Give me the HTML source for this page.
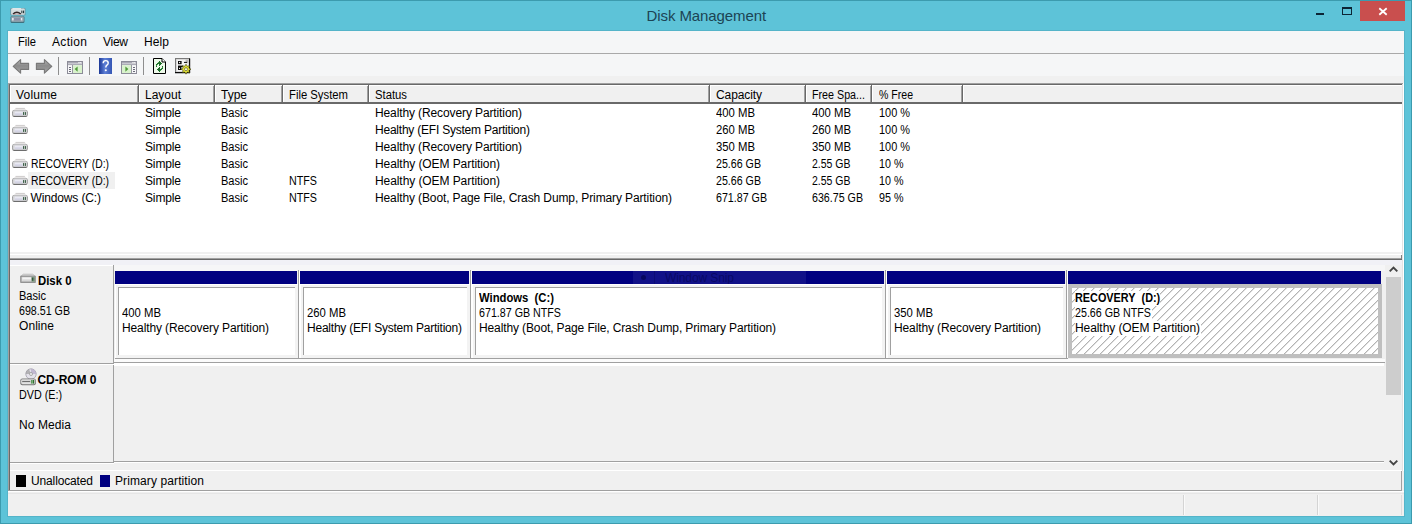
<!DOCTYPE html>
<html>
<head>
<meta charset="utf-8">
<title>Disk Management</title>
<style>
*{box-sizing:border-box;margin:0;padding:0}
html,body{width:1412px;height:524px;overflow:hidden;background:#5dc3d8;}
body{font-family:"Liberation Sans",sans-serif;font-size:12px;color:#000;position:relative;}
.abs{position:absolute}
.t{position:absolute;white-space:pre;font-size:12px;line-height:14px;color:#000;}
.b{font-weight:bold}
svg{position:absolute;overflow:visible}
</style>
</head>
<body>
<div class="abs" style="left:0px;top:0px;width:1412px;height:524px;background:#5dc3d8;border:1px solid #3c9bae;"></div>
<div class="abs" style="left:7px;top:30px;width:1398px;height:487px;background:transparent;border:1px solid #54b4c9;"></div>
<div class="t" style="left:646.6px;top:6.9px;letter-spacing:-0.099px;font-size:15px;line-height:17px;color:#1c4454;">Disk Management</div>
<div class="abs" style="left:1360px;top:1px;width:45px;height:20px;background:#c94f4e;"></div>
<svg style="left:1378px;top:7px" width="10" height="9" viewBox="0 0 10 9"><path d="M1.3 1.3 L8.7 7.7 M8.7 1.3 L1.3 7.7" stroke="#fff" stroke-width="1.8" fill="none"/></svg>
<div class="abs" style="left:1342px;top:7px;width:10px;height:8px;background:transparent;border:1px solid #0c2535;border-top-width:2px;"></div>
<div class="abs" style="left:1316px;top:13px;width:8px;height:2px;background:#0c2535;"></div>
<div class="abs" style="left:8px;top:31px;width:1396px;height:485px;background:#f0f0f0;"></div>
<div class="abs" style="left:8px;top:31px;width:1396px;height:22px;background:#f5f6f7;"></div>
<div class="t" style="left:18px;top:35px;transform:scaleX(0.9305);transform-origin:0 0;">File</div>
<div class="t" style="left:52px;top:35px;letter-spacing:0.328px;">Action</div>
<div class="t" style="left:103px;top:35px;letter-spacing:-0.266px;">View</div>
<div class="t" style="left:144px;top:35px;letter-spacing:0.104px;">Help</div>
<div class="abs" style="left:8px;top:53px;width:1396px;height:1px;background:#a9a9a9;"></div>
<div class="abs" style="left:8px;top:54px;width:1396px;height:22px;background:#f5f6f7;"></div>
<div class="abs" style="left:8px;top:76px;width:1396px;height:8px;background:#f0f0f0;"></div>
<svg style="left:12px;top:58px" width="18" height="17" viewBox="0 0 18 17"><defs><linearGradient id="ga" x1="0" y1="0" x2="0" y2="1"><stop offset="0" stop-color="#b4b4b4"/><stop offset="0.45" stop-color="#8c8c8c"/><stop offset="1" stop-color="#a6a6a6"/></linearGradient></defs><path d="M1.2 8.4 L8.6 1.6 V5.4 H16.6 V11.4 H8.6 V15.2 Z" fill="url(#ga)" stroke="#787878" stroke-width="1.1" stroke-linejoin="round"/></svg>
<svg style="left:35px;top:58px" width="18" height="17" viewBox="0 0 18 17"><path d="M16.8 8.4 L9.4 1.6 V5.4 H1.4 V11.4 H9.4 V15.2 Z" fill="url(#ga)" stroke="#787878" stroke-width="1.1" stroke-linejoin="round"/></svg>
<div class="abs" style="left:58px;top:57px;width:1px;height:18px;background:#8e8e8e"></div>
<div class="abs" style="left:89px;top:57px;width:1px;height:18px;background:#8e8e8e"></div>
<div class="abs" style="left:143px;top:57px;width:1px;height:18px;background:#8e8e8e"></div>
<svg style="left:67px;top:61px" width="16" height="13" viewBox="0 0 16 13"><rect x="0.5" y="0.5" width="15" height="12" fill="#f7f7f9" stroke="#8c8c98" stroke-width="1"/><rect x="1" y="1" width="14" height="1.6" fill="#a9a9b4"/><rect x="11.4" y="1" width="1.2" height="1.2" fill="#fff"/><rect x="13.2" y="1" width="1.2" height="1.2" fill="#fff"/><path d="M1 3.6 H15" stroke="#9a9aa6" stroke-width="0.9"/><path d="M5.6 4 V12" stroke="#8c8c98" stroke-width="1"/><rect x="6.1" y="4.2" width="8.9" height="7.8" fill="#d9f2cc"/><rect x="2" y="6" width="2" height="1" fill="#6a6a78"/><rect x="2" y="8" width="2" height="1" fill="#6a6a78"/><rect x="2" y="10" width="2" height="1" fill="#6a6a78"/><path d="M10.6 5.4 L7.6 8.1 L10.6 10.8 Z" fill="#4f9a3a"/></svg>
<svg style="left:99px;top:58px" width="13" height="16" viewBox="0 0 13 16"><defs><linearGradient id="gh" x1="0" y1="0" x2="1" y2="0"><stop offset="0" stop-color="#1b3796"/><stop offset="0.45" stop-color="#5d7fd6"/><stop offset="1" stop-color="#3556b4"/></linearGradient></defs><rect x="0" y="0" width="13" height="16" fill="url(#gh)"/><path d="M4.2 5.2 Q4.2 2.6 6.7 2.6 Q9.2 2.6 9.2 4.9 Q9.2 6.3 7.9 7.2 Q6.8 8 6.8 9.6" stroke="#fff" stroke-width="1.45" fill="none"/><circle cx="6.8" cy="12.3" r="1.05" fill="#fff"/></svg>
<svg style="left:121px;top:61px" width="16" height="13" viewBox="0 0 16 13"><rect x="0.5" y="0.5" width="15" height="12" fill="#f7f7f9" stroke="#8c8c98" stroke-width="1"/><rect x="1" y="1" width="14" height="1.6" fill="#a9a9b4"/><rect x="11.4" y="1" width="1.2" height="1.2" fill="#fff"/><rect x="13.2" y="1" width="1.2" height="1.2" fill="#fff"/><path d="M1 3.6 H15" stroke="#9a9aa6" stroke-width="0.9"/><path d="M10.4 4 V12" stroke="#8c8c98" stroke-width="1"/><rect x="1" y="4.2" width="8.9" height="7.8" fill="#d9f2cc"/><rect x="12" y="6" width="2" height="1" fill="#6a6a78"/><rect x="12" y="8" width="2" height="1" fill="#6a6a78"/><rect x="12" y="10" width="2" height="1" fill="#6a6a78"/><path d="M4.4 5.4 L7.4 8.1 L4.4 10.8 Z" fill="#4f9a3a"/></svg>
<svg style="left:153px;top:58px" width="13" height="16" viewBox="0 0 13 16"><path d="M0.5 0.5 H9 L12.5 4 V15.5 H0.5 Z" fill="#eefaea" stroke="#000" stroke-width="1" stroke-linejoin="miter"/><path d="M9 0.5 V4 H12.5" fill="#fff" stroke="#000" stroke-width="1"/><rect x="4" y="5" width="4" height="1" fill="#1f6e2b"/><rect x="6" y="3" width="1" height="5" fill="#1f6e2b"/><rect x="7" y="4" width="1" height="3" fill="#1f6e2b"/><rect x="8" y="5" width="1" height="1" fill="#1f6e2b"/><rect x="3" y="6" width="1" height="1" fill="#1f6e2b"/><rect x="3" y="8" width="1" height="1" fill="#1f6e2b"/><rect x="4" y="6" width="1" height="1" fill="#3c9a45"/><rect x="3" y="7" width="1" height="1" fill="#3c9a45"/><rect x="5" y="4" width="1" height="1" fill="#3c9a45"/><rect x="5" y="11" width="4" height="1" fill="#1f6e2b"/><rect x="6" y="9" width="1" height="5" fill="#1f6e2b"/><rect x="5" y="10" width="1" height="3" fill="#1f6e2b"/><rect x="4" y="11" width="1" height="1" fill="#1f6e2b"/><rect x="9" y="10" width="1" height="1" fill="#1f6e2b"/><rect x="9" y="8" width="1" height="1" fill="#1f6e2b"/><rect x="8" y="10" width="1" height="1" fill="#3c9a45"/><rect x="9" y="9" width="1" height="1" fill="#3c9a45"/><rect x="7" y="12" width="1" height="1" fill="#3c9a45"/></svg>
<svg style="left:175px;top:58px" width="17" height="17" viewBox="0 0 17 17"><rect x="0.5" y="0.5" width="14" height="14" fill="#c9c9c9" stroke="#7a7a7a" stroke-width="1"/><rect x="1.6" y="1.6" width="11.8" height="11.8" fill="#f4f4f4"/><rect x="10.6" y="1.6" width="2.8" height="3.6" fill="#b9b9b9"/><path d="M0 14.6 H15 M14.6 0.4 V15" stroke="#0a0a0a" stroke-width="1.2"/><rect x="3" y="3" width="3.6" height="3.2" fill="#0a0a0a"/><rect x="4" y="3.9" width="1.2" height="1.2" fill="#f0f0f0"/><rect x="9" y="3.9" width="3" height="1" fill="#0a0a0a"/><rect x="3" y="7.6" width="5" height="1.4" fill="#0a0a0a"/><rect x="3" y="9" width="3.4" height="3" fill="#0a0a0a"/><rect x="4" y="9.8" width="1" height="1.2" fill="#f0f0f0"/><g transform="translate(11,11.2)"><path d="M0.00 -5.00 L1.19 -2.86 L3.54 -3.54 L2.86 -1.19 L5.00 0.00 L2.86 1.19 L3.54 3.54 L1.19 2.86 L0.00 5.00 L-1.19 2.86 L-3.54 3.54 L-2.86 1.19 L-5.00 0.00 L-2.86 -1.19 L-3.54 -3.54 L-1.19 -2.86 Z" fill="#e4e43a" stroke="#2c2c00" stroke-width="0.55" stroke-linejoin="miter"/><circle cx="0" cy="0" r="1.5" fill="#f6f6e0" stroke="#2c2c00" stroke-width="0.5"/></g></svg>
<svg style="left:10px;top:8px" width="16" height="16" viewBox="0 0 16 16"><rect x="0.2" y="0" width="15.4" height="7.4" rx="1.2" fill="#6f9aa6"/><rect x="1.1" y="0.5" width="13.6" height="6.2" rx="0.8" fill="#d5dddf"/><rect x="2.4" y="0.2" width="8.6" height="1.2" fill="#eef2f3"/><path d="M3 6 Q6.8 2.4 10.8 6" stroke="#33282a" stroke-width="1.4" fill="none"/><path d="M3.4 6.8 Q6.8 4.8 10.4 6.8" stroke="#c3a0a0" stroke-width="0.9" fill="none"/><rect x="11.3" y="2.6" width="1.1" height="2.6" fill="#26393b"/><rect x="13" y="2.6" width="1.1" height="2.6" fill="#26393b"/><rect x="0.4" y="7.9" width="14.2" height="7.1" rx="1.6" fill="#56828f"/><rect x="1.3" y="8.6" width="12.4" height="5.2" rx="1.2" fill="#97a9b2"/><rect x="3" y="9.8" width="8.6" height="2.8" fill="#8a90a6"/><rect x="2.2" y="10" width="1.4" height="2.4" fill="#f2f6f8"/><rect x="10.8" y="10" width="1.4" height="2.4" fill="#e6ecf0"/><path d="M1.2 14.5 H13.8" stroke="#3a6f7d" stroke-width="0.9"/></svg>
<div class="abs" style="left:8px;top:83px;width:1396px;height:1px;background:#a0a0a0;"></div>
<div class="abs" style="left:8px;top:83px;width:1px;height:408px;background:#a0a0a0;"></div>
<div class="abs" style="left:9px;top:84px;width:1394px;height:1px;background:#696969;"></div>
<div class="abs" style="left:9px;top:84px;width:1px;height:407px;background:#696969;"></div>
<div class="abs" style="left:1403px;top:83px;width:1px;height:388px;background:#ffffff;"></div>
<div class="abs" style="left:1402px;top:84px;width:1px;height:387px;background:#e3e3e3;"></div>
<div class="abs" style="left:10px;top:85px;width:1392px;height:17px;background:#f0f0f0;"></div>
<div class="abs" style="left:10px;top:85px;width:1392px;height:1px;background:#ffffff;"></div>
<div class="abs" style="left:10px;top:102px;width:1392px;height:2px;background:#696969;"></div>
<div class="abs" style="left:10px;top:104px;width:1392px;height:148px;background:#ffffff;"></div>
<div class="abs" style="left:138px;top:85px;width:1px;height:18px;background:#696969;"></div>
<div class="abs" style="left:137px;top:86px;width:1px;height:16px;background:#a0a0a0;"></div>
<div class="abs" style="left:139px;top:86px;width:1px;height:16px;background:#ffffff;"></div>
<div class="abs" style="left:214px;top:85px;width:1px;height:18px;background:#696969;"></div>
<div class="abs" style="left:213px;top:86px;width:1px;height:16px;background:#a0a0a0;"></div>
<div class="abs" style="left:215px;top:86px;width:1px;height:16px;background:#ffffff;"></div>
<div class="abs" style="left:282px;top:85px;width:1px;height:18px;background:#696969;"></div>
<div class="abs" style="left:281px;top:86px;width:1px;height:16px;background:#a0a0a0;"></div>
<div class="abs" style="left:283px;top:86px;width:1px;height:16px;background:#ffffff;"></div>
<div class="abs" style="left:368px;top:85px;width:1px;height:18px;background:#696969;"></div>
<div class="abs" style="left:367px;top:86px;width:1px;height:16px;background:#a0a0a0;"></div>
<div class="abs" style="left:369px;top:86px;width:1px;height:16px;background:#ffffff;"></div>
<div class="abs" style="left:709px;top:85px;width:1px;height:18px;background:#696969;"></div>
<div class="abs" style="left:708px;top:86px;width:1px;height:16px;background:#a0a0a0;"></div>
<div class="abs" style="left:710px;top:86px;width:1px;height:16px;background:#ffffff;"></div>
<div class="abs" style="left:805px;top:85px;width:1px;height:18px;background:#696969;"></div>
<div class="abs" style="left:804px;top:86px;width:1px;height:16px;background:#a0a0a0;"></div>
<div class="abs" style="left:806px;top:86px;width:1px;height:16px;background:#ffffff;"></div>
<div class="abs" style="left:871px;top:85px;width:1px;height:18px;background:#696969;"></div>
<div class="abs" style="left:870px;top:86px;width:1px;height:16px;background:#a0a0a0;"></div>
<div class="abs" style="left:872px;top:86px;width:1px;height:16px;background:#ffffff;"></div>
<div class="abs" style="left:962px;top:85px;width:1px;height:18px;background:#696969;"></div>
<div class="abs" style="left:961px;top:86px;width:1px;height:16px;background:#a0a0a0;"></div>
<div class="abs" style="left:963px;top:86px;width:1px;height:16px;background:#ffffff;"></div>
<div class="abs" style="left:10px;top:86px;width:1px;height:16px;background:#ffffff;"></div>
<div class="t" style="left:16px;top:88px;letter-spacing:0.194px;">Volume</div>
<div class="t" style="left:145px;top:88px;letter-spacing:-0.006px;">Layout</div>
<div class="t" style="left:221px;top:88px;letter-spacing:-0.005px;">Type</div>
<div class="t" style="left:289px;top:88px;transform:scaleX(0.9412);transform-origin:0 0;">File System</div>
<div class="t" style="left:375px;top:88px;transform:scaleX(0.9403);transform-origin:0 0;">Status</div>
<div class="t" style="left:716px;top:88px;letter-spacing:-0.098px;">Capacity</div>
<div class="t" style="left:812px;top:88px;transform:scaleX(0.8926);transform-origin:0 0;">Free Spa...</div>
<div class="t" style="left:879px;top:88px;transform:scaleX(0.8788);transform-origin:0 0;">% Free</div>
<div class="abs" style="left:28px;top:172px;width:87px;height:17px;background:#f0f0f0;"></div>
<svg style="left:12px;top:108px" width="16" height="9" viewBox="0 0 16 9"><path d="M4 0 H12.5 L14.5 2.2 H1.5 Z" fill="#e6e4e4"/><path d="M3.6 0.4 H12.8" stroke="#c9c6c6" stroke-width="0.8"/><rect x="0.2" y="2" width="15.6" height="7" rx="2.2" ry="2.2" fill="#8a8a8a"/><rect x="0.9" y="2.2" width="14.2" height="5.8" rx="1.6" ry="1.6" fill="#d4d4d6"/><rect x="2.6" y="3.6" width="8.2" height="3.6" fill="#e9e9f3"/><rect x="3" y="5.4" width="7.6" height="1.8" fill="#d3d3e3"/><rect x="11" y="4.1" width="1.1" height="2.8" fill="#3f634a"/><rect x="12.9" y="4.1" width="1.1" height="2.8" fill="#3f634a"/><path d="M1.6 8.4 H14.4" stroke="#6a6a6a" stroke-width="1"/></svg>
<div class="t" style="left:145px;top:106px;letter-spacing:-0.138px;">Simple</div>
<div class="t" style="left:221px;top:106px;transform:scaleX(0.9201);transform-origin:0 0;">Basic</div>
<div class="t" style="left:375px;top:106px;letter-spacing:-0.113px;">Healthy (Recovery Partition)</div>
<div class="t" style="left:716px;top:106px;transform:scaleX(0.9430);transform-origin:0 0;">400 MB</div>
<div class="t" style="left:812px;top:106px;transform:scaleX(0.9430);transform-origin:0 0;">400 MB</div>
<div class="t" style="left:878.5px;top:106px;transform:scaleX(0.9109);transform-origin:0 0;">100 %</div>
<svg style="left:12px;top:125px" width="16" height="9" viewBox="0 0 16 9"><path d="M4 0 H12.5 L14.5 2.2 H1.5 Z" fill="#e6e4e4"/><path d="M3.6 0.4 H12.8" stroke="#c9c6c6" stroke-width="0.8"/><rect x="0.2" y="2" width="15.6" height="7" rx="2.2" ry="2.2" fill="#8a8a8a"/><rect x="0.9" y="2.2" width="14.2" height="5.8" rx="1.6" ry="1.6" fill="#d4d4d6"/><rect x="2.6" y="3.6" width="8.2" height="3.6" fill="#e9e9f3"/><rect x="3" y="5.4" width="7.6" height="1.8" fill="#d3d3e3"/><rect x="11" y="4.1" width="1.1" height="2.8" fill="#3f634a"/><rect x="12.9" y="4.1" width="1.1" height="2.8" fill="#3f634a"/><path d="M1.6 8.4 H14.4" stroke="#6a6a6a" stroke-width="1"/></svg>
<div class="t" style="left:145px;top:123px;letter-spacing:-0.138px;">Simple</div>
<div class="t" style="left:221px;top:123px;transform:scaleX(0.9201);transform-origin:0 0;">Basic</div>
<div class="t" style="left:375px;top:123px;letter-spacing:-0.220px;">Healthy (EFI System Partition)</div>
<div class="t" style="left:716px;top:123px;transform:scaleX(0.9430);transform-origin:0 0;">260 MB</div>
<div class="t" style="left:812px;top:123px;transform:scaleX(0.9430);transform-origin:0 0;">260 MB</div>
<div class="t" style="left:878.5px;top:123px;transform:scaleX(0.9109);transform-origin:0 0;">100 %</div>
<svg style="left:12px;top:142px" width="16" height="9" viewBox="0 0 16 9"><path d="M4 0 H12.5 L14.5 2.2 H1.5 Z" fill="#e6e4e4"/><path d="M3.6 0.4 H12.8" stroke="#c9c6c6" stroke-width="0.8"/><rect x="0.2" y="2" width="15.6" height="7" rx="2.2" ry="2.2" fill="#8a8a8a"/><rect x="0.9" y="2.2" width="14.2" height="5.8" rx="1.6" ry="1.6" fill="#d4d4d6"/><rect x="2.6" y="3.6" width="8.2" height="3.6" fill="#e9e9f3"/><rect x="3" y="5.4" width="7.6" height="1.8" fill="#d3d3e3"/><rect x="11" y="4.1" width="1.1" height="2.8" fill="#3f634a"/><rect x="12.9" y="4.1" width="1.1" height="2.8" fill="#3f634a"/><path d="M1.6 8.4 H14.4" stroke="#6a6a6a" stroke-width="1"/></svg>
<div class="t" style="left:145px;top:140px;letter-spacing:-0.138px;">Simple</div>
<div class="t" style="left:221px;top:140px;transform:scaleX(0.9201);transform-origin:0 0;">Basic</div>
<div class="t" style="left:375px;top:140px;letter-spacing:-0.113px;">Healthy (Recovery Partition)</div>
<div class="t" style="left:716px;top:140px;transform:scaleX(0.9430);transform-origin:0 0;">350 MB</div>
<div class="t" style="left:812px;top:140px;transform:scaleX(0.9430);transform-origin:0 0;">350 MB</div>
<div class="t" style="left:878.5px;top:140px;transform:scaleX(0.9109);transform-origin:0 0;">100 %</div>
<svg style="left:12px;top:159px" width="16" height="9" viewBox="0 0 16 9"><path d="M4 0 H12.5 L14.5 2.2 H1.5 Z" fill="#e6e4e4"/><path d="M3.6 0.4 H12.8" stroke="#c9c6c6" stroke-width="0.8"/><rect x="0.2" y="2" width="15.6" height="7" rx="2.2" ry="2.2" fill="#8a8a8a"/><rect x="0.9" y="2.2" width="14.2" height="5.8" rx="1.6" ry="1.6" fill="#d4d4d6"/><rect x="2.6" y="3.6" width="8.2" height="3.6" fill="#e9e9f3"/><rect x="3" y="5.4" width="7.6" height="1.8" fill="#d3d3e3"/><rect x="11" y="4.1" width="1.1" height="2.8" fill="#3f634a"/><rect x="12.9" y="4.1" width="1.1" height="2.8" fill="#3f634a"/><path d="M1.6 8.4 H14.4" stroke="#6a6a6a" stroke-width="1"/></svg>
<div class="t" style="left:30.5px;top:157px;transform:scaleX(0.8643);transform-origin:0 0;">RECOVERY (D:)</div>
<div class="t" style="left:145px;top:157px;letter-spacing:-0.138px;">Simple</div>
<div class="t" style="left:221px;top:157px;transform:scaleX(0.9201);transform-origin:0 0;">Basic</div>
<div class="t" style="left:375px;top:157px;letter-spacing:-0.077px;">Healthy (OEM Partition)</div>
<div class="t" style="left:716px;top:157px;transform:scaleX(0.8875);transform-origin:0 0;">25.66 GB</div>
<div class="t" style="left:812px;top:157px;transform:scaleX(0.8744);transform-origin:0 0;">2.55 GB</div>
<div class="t" style="left:878.5px;top:157px;transform:scaleX(0.8955);transform-origin:0 0;">10 %</div>
<svg style="left:12px;top:176px" width="16" height="9" viewBox="0 0 16 9"><path d="M4 0 H12.5 L14.5 2.2 H1.5 Z" fill="#e6e4e4"/><path d="M3.6 0.4 H12.8" stroke="#c9c6c6" stroke-width="0.8"/><rect x="0.2" y="2" width="15.6" height="7" rx="2.2" ry="2.2" fill="#8a8a8a"/><rect x="0.9" y="2.2" width="14.2" height="5.8" rx="1.6" ry="1.6" fill="#d4d4d6"/><rect x="2.6" y="3.6" width="8.2" height="3.6" fill="#e9e9f3"/><rect x="3" y="5.4" width="7.6" height="1.8" fill="#d3d3e3"/><rect x="11" y="4.1" width="1.1" height="2.8" fill="#3f634a"/><rect x="12.9" y="4.1" width="1.1" height="2.8" fill="#3f634a"/><path d="M1.6 8.4 H14.4" stroke="#6a6a6a" stroke-width="1"/></svg>
<div class="t" style="left:30.5px;top:174px;transform:scaleX(0.8643);transform-origin:0 0;">RECOVERY (D:)</div>
<div class="t" style="left:145px;top:174px;letter-spacing:-0.138px;">Simple</div>
<div class="t" style="left:221px;top:174px;transform:scaleX(0.9201);transform-origin:0 0;">Basic</div>
<div class="t" style="left:289px;top:174px;transform:scaleX(0.8933);transform-origin:0 0;">NTFS</div>
<div class="t" style="left:375px;top:174px;letter-spacing:-0.077px;">Healthy (OEM Partition)</div>
<div class="t" style="left:716px;top:174px;transform:scaleX(0.8875);transform-origin:0 0;">25.66 GB</div>
<div class="t" style="left:812px;top:174px;transform:scaleX(0.8744);transform-origin:0 0;">2.55 GB</div>
<div class="t" style="left:878.5px;top:174px;transform:scaleX(0.8955);transform-origin:0 0;">10 %</div>
<svg style="left:12px;top:193px" width="16" height="9" viewBox="0 0 16 9"><path d="M4 0 H12.5 L14.5 2.2 H1.5 Z" fill="#e6e4e4"/><path d="M3.6 0.4 H12.8" stroke="#c9c6c6" stroke-width="0.8"/><rect x="0.2" y="2" width="15.6" height="7" rx="2.2" ry="2.2" fill="#8a8a8a"/><rect x="0.9" y="2.2" width="14.2" height="5.8" rx="1.6" ry="1.6" fill="#d4d4d6"/><rect x="2.6" y="3.6" width="8.2" height="3.6" fill="#e9e9f3"/><rect x="3" y="5.4" width="7.6" height="1.8" fill="#d3d3e3"/><rect x="11" y="4.1" width="1.1" height="2.8" fill="#3f634a"/><rect x="12.9" y="4.1" width="1.1" height="2.8" fill="#3f634a"/><path d="M1.6 8.4 H14.4" stroke="#6a6a6a" stroke-width="1"/></svg>
<div class="t" style="left:30.5px;top:191px;letter-spacing:-0.138px;">Windows (C:)</div>
<div class="t" style="left:145px;top:191px;letter-spacing:-0.138px;">Simple</div>
<div class="t" style="left:221px;top:191px;transform:scaleX(0.9201);transform-origin:0 0;">Basic</div>
<div class="t" style="left:289px;top:191px;transform:scaleX(0.8933);transform-origin:0 0;">NTFS</div>
<div class="t" style="left:375px;top:191px;letter-spacing:-0.117px;">Healthy (Boot, Page File, Crash Dump, Primary Partition)</div>
<div class="t" style="left:716px;top:191px;transform:scaleX(0.8889);transform-origin:0 0;">671.87 GB</div>
<div class="t" style="left:812px;top:191px;transform:scaleX(0.8889);transform-origin:0 0;">636.75 GB</div>
<div class="t" style="left:878.5px;top:191px;transform:scaleX(0.8955);transform-origin:0 0;">95 %</div>
<div class="abs" style="left:10px;top:252px;width:1392px;height:7px;background:#f0f0f0;"></div>
<div class="abs" style="left:10px;top:254px;width:1392px;height:1px;background:#ffffff;"></div>
<div class="abs" style="left:10px;top:258px;width:1392px;height:1px;background:#a0a0a0;"></div>
<div class="abs" style="left:10px;top:259px;width:1392px;height:1px;background:#696969;"></div>
<div class="abs" style="left:1401px;top:255px;width:1px;height:4px;background:#808080;"></div>
<div class="abs" style="left:10px;top:260px;width:1392px;height:5px;background:#f1f1f6;"></div>
<div class="abs" style="left:10px;top:265px;width:1392px;height:205px;background:#f0f0f0;"></div>
<div class="abs" style="left:114px;top:265px;width:1271px;height:6px;background:#f6f6f7;"></div>
<div class="abs" style="left:113px;top:265px;width:1px;height:98px;background:#a0a0a0;"></div>
<div class="abs" style="left:113px;top:365px;width:1px;height:98px;background:#a0a0a0;"></div>
<div class="abs" style="left:10px;top:265px;width:103px;height:1px;background:#ffffff;"></div>
<div class="abs" style="left:10px;top:363px;width:104px;height:1px;background:#a0a0a0;"></div>
<div class="abs" style="left:10px;top:364px;width:104px;height:1px;background:#ffffff;"></div>
<div class="abs" style="left:114px;top:359px;width:1271px;height:3px;background:#fbfbfb;"></div>
<div class="abs" style="left:114px;top:362px;width:1271px;height:1px;background:#a0a0a0;"></div>
<div class="abs" style="left:114px;top:363px;width:1270px;height:3px;background:#ffffff;"></div>
<div class="abs" style="left:10px;top:462px;width:104px;height:1px;background:#a0a0a0;"></div>
<div class="abs" style="left:114px;top:461px;width:1270px;height:1px;background:#a0a0a0;"></div>
<div class="abs" style="left:114px;top:462px;width:1270px;height:1px;background:#ffffff;"></div>
<div class="abs" style="left:10px;top:463px;width:104px;height:1px;background:#ffffff;"></div>
<svg style="left:20px;top:274px" width="16" height="9" viewBox="0 0 16 9"><path d="M3.2 0.2 H12.8 L14.8 2 H1.2 Z" fill="#dcdcdc" stroke="#a8a8a8" stroke-width="0.6"/><rect x="0.3" y="1.8" width="15.4" height="7" fill="#7d7d7d"/><rect x="1.3" y="2.6" width="13.4" height="5.2" fill="#c9c9c9"/><rect x="2.2" y="3.4" width="8.8" height="3.6" fill="#f3f3f3"/><rect x="2.2" y="5.4" width="8.8" height="1.6" fill="#d6d6d6"/><rect x="11.5" y="2.6" width="3.4" height="5.4" fill="#8fa38f"/><rect x="11.9" y="3.6" width="1.2" height="3.2" fill="#2f5a3c"/><rect x="13.3" y="3.6" width="1.0" height="3.2" fill="#55775a"/></svg>
<div class="t b" style="left:37.5px;top:273.5px;transform:scaleX(0.9474);transform-origin:0 0;">Disk 0</div>
<div class="t" style="left:19px;top:289px;transform:scaleX(0.9201);transform-origin:0 0;">Basic</div>
<div class="t" style="left:19px;top:304px;transform:scaleX(0.8889);transform-origin:0 0;">698.51 GB</div>
<div class="t" style="left:19px;top:319px;letter-spacing:0.062px;">Online</div>
<svg style="left:20px;top:367.5px" width="17" height="18" viewBox="0 0 17 18"><circle cx="11" cy="6" r="5.2" fill="#e4e2ea" stroke="#a9a7b2" stroke-width="0.9"/><path d="M11 0.8 A5.2 5.2 0 0 1 16.2 6 L11 6 Z" fill="#b9aecb" opacity="0.8"/><path d="M5.8 6 A5.2 5.2 0 0 1 9 1.2 L11 6 Z" fill="#9c9c9c" opacity="0.7"/><circle cx="11" cy="6" r="1.5" fill="#f4f4f4" stroke="#909090" stroke-width="0.7"/><rect x="0.3" y="10.6" width="15.6" height="6.6" rx="2" ry="2" fill="#7a7a7a"/><rect x="1.1" y="11.2" width="14" height="5" rx="1.4" ry="1.4" fill="#d8d8d8"/><rect x="2.2" y="13" width="8" height="1.4" fill="#6e6e6e"/><rect x="2.2" y="14.4" width="8" height="1" fill="#f4f4f4"/><rect x="11.2" y="12" width="1.4" height="3.6" fill="#3f8f3f"/><rect x="13" y="12" width="1.2" height="3.6" fill="#2f6f2f"/></svg>
<div class="t b" style="left:37.5px;top:372.5px;letter-spacing:-0.049px;">CD-ROM 0</div>
<div class="t" style="left:19px;top:388px;transform:scaleX(0.8958);transform-origin:0 0;">DVD (E:)</div>
<div class="t" style="left:19px;top:418px;letter-spacing:0.092px;">No Media</div>
<div class="abs" style="left:115px;top:271px;width:182px;height:13px;background:#000080;"></div>
<div class="abs" style="left:115px;top:284px;width:183px;height:74px;background:#f3f3f3;"></div>
<div class="abs" style="left:115px;top:284px;width:183px;height:1px;background:#ffffff;"></div>
<div class="abs" style="left:115px;top:284px;width:1px;height:74px;background:#ffffff;"></div>
<div class="abs" style="left:115px;top:358px;width:185px;height:1px;background:#a0a0a0;"></div>
<div class="abs" style="left:298px;top:270px;width:1px;height:89px;background:#a0a0a0;"></div>
<div class="abs" style="left:299px;top:271px;width:1px;height:87px;background:#ffffff;"></div>
<div class="abs" style="left:118px;top:287px;width:177px;height:68px;background:#ffffff;border-left:1px solid #a0a0a0;border-top:1px solid #a0a0a0;"></div>
<div class="t" style="left:122px;top:306px;transform:scaleX(0.9430);transform-origin:0 0;">400 MB</div>
<div class="t" style="left:122px;top:321px;letter-spacing:-0.113px;">Healthy (Recovery Partition)</div>
<div class="abs" style="left:300px;top:271px;width:169px;height:13px;background:#000080;"></div>
<div class="abs" style="left:300px;top:284px;width:170px;height:74px;background:#f3f3f3;"></div>
<div class="abs" style="left:300px;top:284px;width:170px;height:1px;background:#ffffff;"></div>
<div class="abs" style="left:300px;top:284px;width:1px;height:74px;background:#ffffff;"></div>
<div class="abs" style="left:300px;top:358px;width:172px;height:1px;background:#a0a0a0;"></div>
<div class="abs" style="left:470px;top:270px;width:1px;height:89px;background:#a0a0a0;"></div>
<div class="abs" style="left:471px;top:271px;width:1px;height:87px;background:#ffffff;"></div>
<div class="abs" style="left:303px;top:287px;width:164px;height:68px;background:#ffffff;border-left:1px solid #a0a0a0;border-top:1px solid #a0a0a0;"></div>
<div class="t" style="left:307px;top:306px;transform:scaleX(0.9430);transform-origin:0 0;">260 MB</div>
<div class="t" style="left:307px;top:321px;letter-spacing:-0.220px;">Healthy (EFI System Partition)</div>
<div class="abs" style="left:472px;top:271px;width:412px;height:13px;background:#000080;"></div>
<div class="abs" style="left:472px;top:284px;width:413px;height:74px;background:#f3f3f3;"></div>
<div class="abs" style="left:472px;top:284px;width:413px;height:1px;background:#ffffff;"></div>
<div class="abs" style="left:472px;top:284px;width:1px;height:74px;background:#ffffff;"></div>
<div class="abs" style="left:472px;top:358px;width:415px;height:1px;background:#a0a0a0;"></div>
<div class="abs" style="left:885px;top:270px;width:1px;height:89px;background:#a0a0a0;"></div>
<div class="abs" style="left:886px;top:271px;width:1px;height:87px;background:#ffffff;"></div>
<div class="abs" style="left:475px;top:287px;width:407px;height:68px;background:#ffffff;border-left:1px solid #a0a0a0;border-top:1px solid #a0a0a0;"></div>
<div class="t b" style="left:479px;top:291px;transform:scaleX(0.9390);transform-origin:0 0;">Windows&nbsp; (C:)</div>
<div class="t" style="left:479px;top:306px;transform:scaleX(0.8909);transform-origin:0 0;">671.87 GB NTFS</div>
<div class="t" style="left:479px;top:321px;letter-spacing:-0.117px;">Healthy (Boot, Page File, Crash Dump, Primary Partition)</div>
<div class="abs" style="left:887px;top:271px;width:178px;height:13px;background:#000080;"></div>
<div class="abs" style="left:887px;top:284px;width:179px;height:74px;background:#f3f3f3;"></div>
<div class="abs" style="left:887px;top:284px;width:179px;height:1px;background:#ffffff;"></div>
<div class="abs" style="left:887px;top:284px;width:1px;height:74px;background:#ffffff;"></div>
<div class="abs" style="left:887px;top:358px;width:181px;height:1px;background:#a0a0a0;"></div>
<div class="abs" style="left:1066px;top:270px;width:1px;height:89px;background:#a0a0a0;"></div>
<div class="abs" style="left:1067px;top:271px;width:1px;height:87px;background:#ffffff;"></div>
<div class="abs" style="left:890px;top:287px;width:173px;height:68px;background:#ffffff;border-left:1px solid #a0a0a0;border-top:1px solid #a0a0a0;"></div>
<div class="t" style="left:894px;top:306px;transform:scaleX(0.9430);transform-origin:0 0;">350 MB</div>
<div class="t" style="left:894px;top:321px;letter-spacing:-0.113px;">Healthy (Recovery Partition)</div>
<div class="abs" style="left:1068px;top:271px;width:313px;height:13px;background:#000080;"></div>
<div class="abs" style="left:1068px;top:284px;width:314px;height:74px;background:#bfbfbf"></div>
<svg style="left:1072px;top:288px" width="306" height="66" viewBox="0 0 306 66"><defs><pattern id="hp" width="8" height="8" patternUnits="userSpaceOnUse" x="6.3" y="0"><rect width="8" height="8" fill="#fff"/><path d="M-1 9 L9 -1 M-1 1 L1 -1 M7 9 L9 7" stroke="#777777" stroke-width="0.8"/></pattern></defs><rect width="306" height="66" fill="url(#hp)"/></svg>
<div class="abs" style="left:1075px;top:291px;width:85px;height:15px;background:#fff"></div>
<div class="abs" style="left:1075px;top:306px;width:76.5px;height:15px;background:#fff"></div>
<div class="abs" style="left:1075px;top:321px;width:126px;height:15px;background:#fff"></div>
<div class="t b" style="left:1075px;top:291px;transform:scaleX(0.9041);transform-origin:0 0;">RECOVERY&nbsp; (D:)</div>
<div class="t" style="left:1075px;top:306px;transform:scaleX(0.8902);transform-origin:0 0;">25.66 GB NTFS</div>
<div class="t" style="left:1075px;top:321px;letter-spacing:-0.077px;">Healthy (OEM Partition)</div>
<div class="abs" style="left:633px;top:271px;width:173px;height:13px;background:rgba(255,255,255,0.065);"></div>
<div class="abs" style="left:654px;top:271px;width:1px;height:13px;background:rgba(0,0,60,0.25);"></div>
<div class="abs" style="left:641px;top:275px;width:5px;height:5px;border-radius:3px;background:rgba(0,0,70,0.6)"></div>
<div class="t" style="left:665px;top:271px;letter-spacing:-0.103px;color:rgba(0,0,70,0.55);height:13px;overflow:hidden;">Window Snip</div>
<div class="abs" style="left:1385px;top:265px;width:17px;height:205px;background:#f0f0f0;"></div>
<div class="abs" style="left:1386px;top:277px;width:15px;height:118px;background:#cdcdcd;"></div>
<svg style="left:1389px;top:266px" width="9" height="6" viewBox="0 0 9 6"><path d="M0.7 5.3 L4.5 1.5 L8.3 5.3" stroke="#444444" stroke-width="1.9" fill="none"/></svg>
<svg style="left:1389px;top:460px" width="9" height="6" viewBox="0 0 9 6"><path d="M0.7 0.7 L4.5 4.5 L8.3 0.7" stroke="#444444" stroke-width="1.9" fill="none"/></svg>
<div class="abs" style="left:10px;top:470px;width:1392px;height:1px;background:#ffffff;"></div>
<div class="abs" style="left:10px;top:471px;width:1392px;height:19px;background:#f0f0f0;"></div>
<div class="abs" style="left:16px;top:475px;width:10px;height:12px;background:#000000;"></div>
<div class="t" style="left:31px;top:474px;letter-spacing:-0.138px;">Unallocated</div>
<div class="abs" style="left:100px;top:475px;width:10px;height:12px;background:#000080;"></div>
<div class="t" style="left:115px;top:474px;letter-spacing:0.103px;">Primary partition</div>
<div class="abs" style="left:1401px;top:471px;width:1px;height:20px;background:#a0a0a0;"></div>
<div class="abs" style="left:1402px;top:471px;width:2px;height:21px;background:#f0f0f0;"></div>
<div class="abs" style="left:8px;top:490px;width:1394px;height:1px;background:#a0a0a0;"></div>
<div class="abs" style="left:8px;top:491px;width:1396px;height:1px;background:#ffffff;"></div>
<div class="abs" style="left:8px;top:492px;width:1396px;height:1px;background:#f0f0f0;"></div>
<div class="abs" style="left:8px;top:493px;width:1396px;height:1px;background:#e6e6e6;"></div>
<div class="abs" style="left:8px;top:494px;width:1396px;height:22px;background:#f0f0f0;"></div>
<div class="abs" style="left:1183px;top:495px;width:1px;height:20px;background:#d4d4d4;"></div>
<div class="abs" style="left:1184px;top:495px;width:1px;height:20px;background:#fafafa;"></div>
<div class="abs" style="left:1317px;top:495px;width:1px;height:20px;background:#d4d4d4;"></div>
<div class="abs" style="left:1318px;top:495px;width:1px;height:20px;background:#fafafa;"></div>
<div class="abs" style="left:1401px;top:495px;width:1px;height:20px;background:#dcdcdc;"></div>
</body>
</html>
